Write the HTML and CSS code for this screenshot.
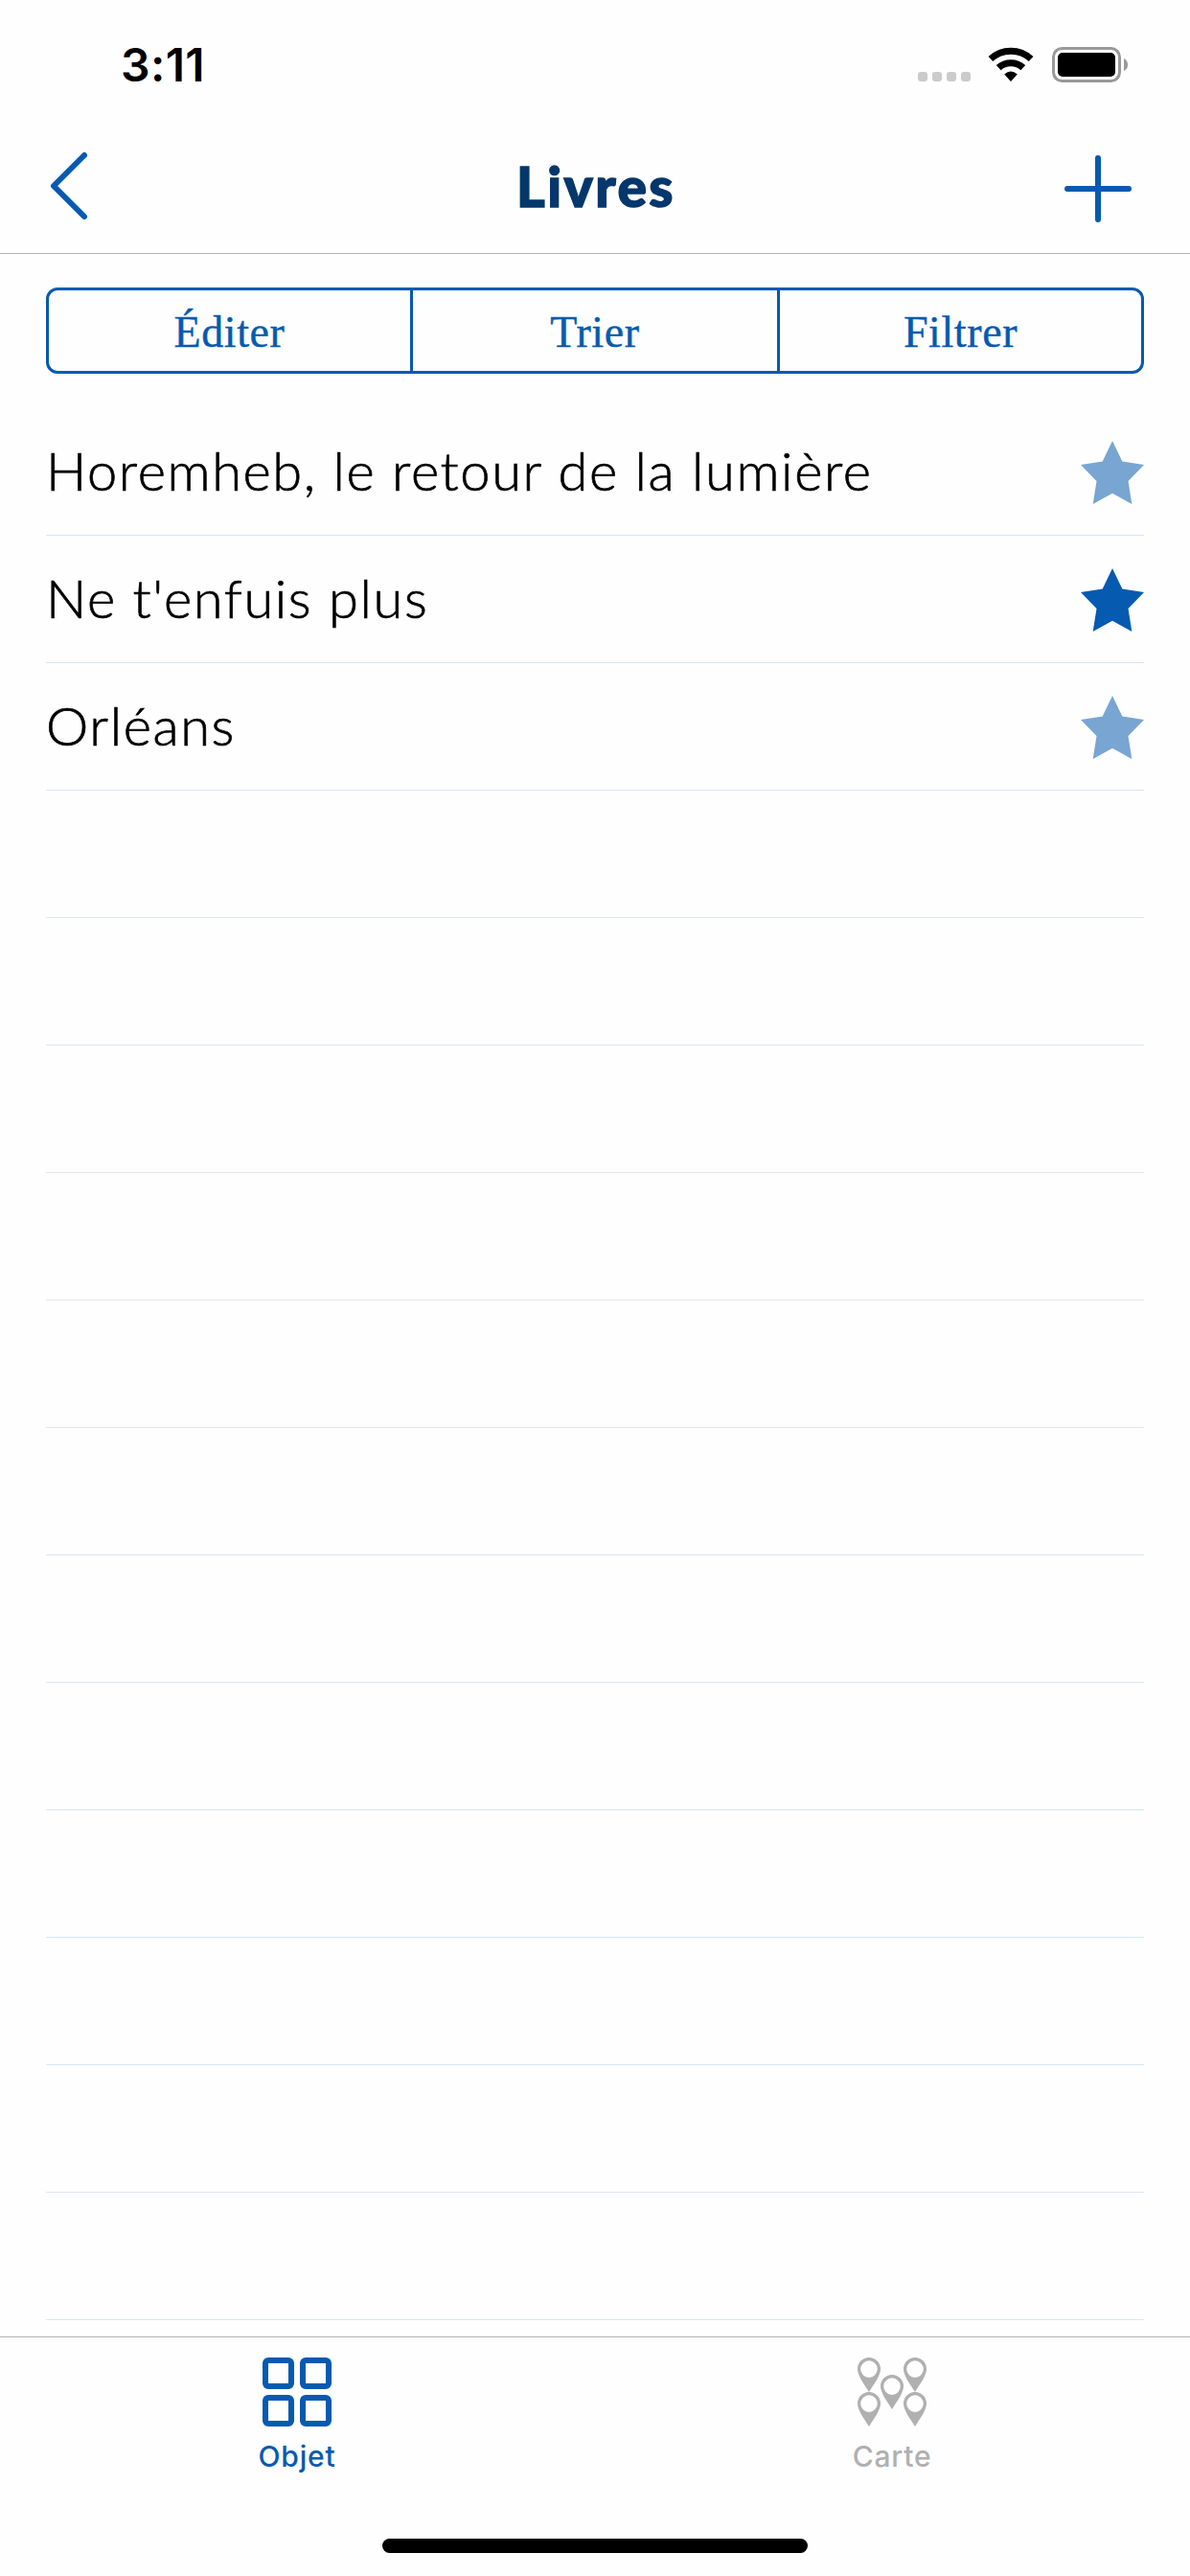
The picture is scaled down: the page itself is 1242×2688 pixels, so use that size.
FILE: index.html
```html
<!DOCTYPE html>
<html lang="fr">
<head>
<meta charset="utf-8">
<title>Livres</title>
<link rel="stylesheet" href="styles.css">
</head>
<body>
<div class="screen">
  <div class="status">
    <span class="time">3:11</span>
    <div class="status-icons">
      <svg class="signal" width="56" height="10" viewBox="0 0 56 10" fill="#cbcbcb"><rect width="10" height="10" rx="3"/><rect x="15" width="10" height="10" rx="3"/><rect x="30" width="10" height="10" rx="3"/><rect x="45" width="10" height="10" rx="3"/></svg>
      <svg class="wifi" width="48" height="36" viewBox="0 0 48 36"><path d="M24 36 L17.2 28.500 Q24 22.500 30.8 28.500 Z"/><path d="M11.200 21.600 A19 19 0 0 1 36.800 21.600" fill="none" stroke="#000" stroke-width="7"/><path d="M2.900 12.500 A31 31 0 0 1 45.100 12.500" fill="none" stroke="#000" stroke-width="7"/></svg>
      <svg class="battery" width="80" height="38" viewBox="0 0 80 38"><rect x="1.5" y="1.5" width="69" height="34" rx="9" fill="none" stroke="#999" stroke-width="3"/><rect x="6" y="6" width="60" height="25" rx="5"/><path d="M75 12 Q79 14 79 18.500 Q79 23 75 25 Z" fill="#999"/></svg>
    </div>
  </div>
  <header class="nav">
    <svg class="back" width="44" height="76" viewBox="0 0 44 76"><path d="M38 6 L6 38 L38 70" /></svg>
    <h1 class="title">Livres</h1>
    <svg class="add" width="70" height="70" viewBox="0 0 70 70"><path d="M35 3 V67 M3 35 H67"/></svg>
  </header>
  <div class="segments">
    <button class="segment">Éditer</button>
    <button class="segment">Trier</button>
    <button class="segment">Filtrer</button>
  </div>
  <ul class="list">
    <li class="row"><span class="name">Horemheb, le retour de la lumière</span><svg class="star" viewBox="0 0 66 66"><path d="M33 0 L43.3 21.500 L66 25 L49.500 42 L53.3 66 L33 54.700 L12.700 66 L16.500 42 L0 25 L22.700 21.500 Z"/></svg></li>
    <li class="row"><span class="name">Ne t'enfuis plus</span><svg class="star star-on" viewBox="0 0 66 66"><path d="M33 0 L43.3 21.500 L66 25 L49.500 42 L53.3 66 L33 54.700 L12.700 66 L16.500 42 L0 25 L22.700 21.500 Z"/></svg></li>
    <li class="row"><span class="name">Orléans</span><svg class="star" viewBox="0 0 66 66"><path d="M33 0 L43.3 21.500 L66 25 L49.500 42 L53.3 66 L33 54.700 L12.700 66 L16.500 42 L0 25 L22.700 21.500 Z"/></svg></li>
    <li class="row"></li><li class="row"></li><li class="row"></li><li class="row"></li><li class="row"></li><li class="row"></li><li class="row"></li><li class="row"></li><li class="row"></li><li class="row"></li><li class="row"></li><li class="row"></li>
  </ul>
  <nav class="tabs">
    <a class="tab tab-on">
      <svg width="72" height="72" viewBox="0 0 72 72" fill="none" stroke="currentColor" stroke-width="6"><rect x="3" y="3" width="27" height="27" rx="3"/><rect x="42" y="3" width="27" height="27" rx="3"/><rect x="3" y="42" width="27" height="27" rx="3"/><rect x="42" y="42" width="27" height="27" rx="3"/></svg>
      <span>Objet</span>
    </a>
    <a class="tab">
      <svg width="72" height="72" viewBox="0 0 72 72" fill="currentColor"><defs><path id="pin" fill-rule="evenodd" d="M12 0 A12 12 0 0 1 24 12 C24 19 17 28 12 36 C7 28 0 19 0 12 A12 12 0 0 1 12 0 Z M12 3.300 A8.800 8.800 0 1 0 12 20.900 A8.800 8.800 0 1 0 12 3.300 Z"/></defs><use href="#pin"/><use href="#pin" x="48"/><use href="#pin" x="24" y="18"/><use href="#pin" y="36"/><use href="#pin" x="48" y="36"/></svg>
      <span>Carte</span>
    </a>
  </nav>
  <div class="home"><div class="home-bar"></div></div>
</div>
</body>
</html>
```
FILE: styles.css
```css
* { box-sizing: border-box; }
body { margin: 0; background: #fefefe; color: #000; }
.screen { width: 1242px; height: 2688px; display: flex; flex-direction: column; overflow: hidden; }
.status { height: 132px; flex: none; display: flex; justify-content: space-between; padding: 0 64px 0 126px; }
.time { font: 600 48px/58px Inter, sans-serif; padding-top: 39px; letter-spacing: 0.4px; }
.status-icons { display: flex; align-items: flex-start; padding-top: 49px; }
.signal { margin: 26px 17px 0 0; }
.wifi { margin-right: 19px; }
.nav { height: 133px; flex: none; display: grid; grid-template-columns: 1fr auto 1fr; align-items: start; border-bottom: 1px solid #b0b0b0; padding: 24px 50px 0; }
.back, .add { fill: none; stroke: #065ab0; stroke-width: 6; stroke-linecap: round; stroke-linejoin: round; }
.title { margin: -2px 0 0; padding-left: 2px; font: 900 57px/80px Lato, sans-serif; letter-spacing: 2.4px; -webkit-text-stroke: 1.4px #04376b; color: #04376b; }
.add { margin: 6px 11px 0 0; justify-self: end; }
.segments { flex: none; height: 90px; margin: 35px 48px 0; display: grid; grid-template-columns: 380px 383px 1fr; border: 3px solid #065ab0; border-radius: 12px; }
.segment { border: 0; border-right: 3px solid #065ab0; background: none; padding: 3px 0 0; color: #065ab0; font: 46px/81px "Liberation Serif", serif; letter-spacing: 0.6px; -webkit-text-stroke: 0.4px #065ab0; }
.segment:last-child { border-right: 0; }
.list { list-style: none; margin: 36px 48px 0; padding: 0; height: 2012px; overflow: hidden; flex: none; }
.row { height: 133px; display: flex; align-items: center; justify-content: space-between; border-bottom: 1px solid #d8e7f3; }
.name { font: 300 56px/80px Lato, sans-serif; letter-spacing: 1.6px; -webkit-text-stroke: 0.7px #000; padding-bottom: 3px; }
.star { width: 66px; height: 66px; margin-top: 2px; fill: #78a5d2; }
.star-on { fill: #065ab0; }
.tabs { flex: none; height: 148px; border-top: 1px solid #b0b0b0; display: grid; grid-template-columns: 620px 622px; padding-top: 21px; }
.tab { display: flex; flex-direction: column; align-items: center; color: #b0b0b0; font: 500 30px/36px Inter, sans-serif; letter-spacing: 0.8px; }
.tab span { margin-top: 13px; }
.tab-on { color: #065ab0; }
.home { display: flex; justify-content: center; padding-top: 63px; }
.home-bar { width: 444px; height: 15px; border-radius: 8px; background: #000; }
```
